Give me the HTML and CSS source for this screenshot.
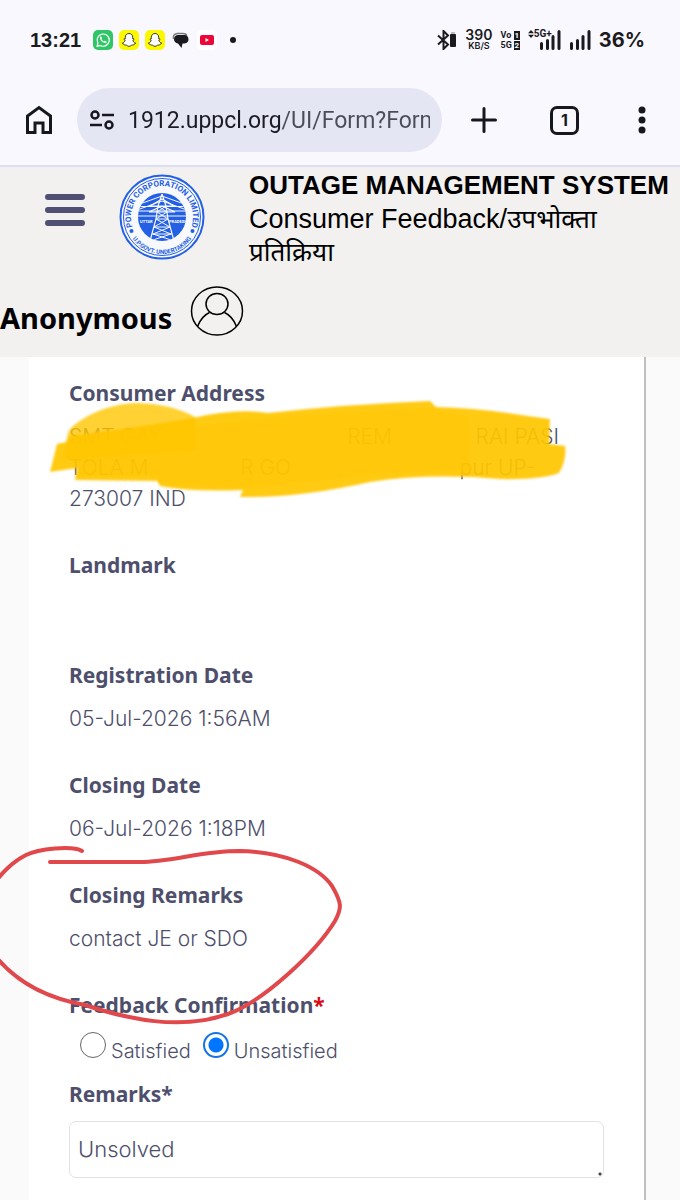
FILE: index.html
```html
<!DOCTYPE html>
<html lang="en">
<head>
    <meta charset="UTF-8">
    <meta name="viewport" content="width=device-width, initial-scale=1.0">
    <title>Outage Management System</title>
    <link rel="stylesheet" href="styles.css">
</head>
<body>
    <div class="status-bar">
        <div class="status-left">
            <span class="clock">13:21</span>
            <svg class="app-icon" viewBox="0 0 20 20">
                <rect width="20" height="20" rx="5" fill="#2fc665"/>
                <path d="M4 16.3l.9-3.2A6.1 6.1 0 1 1 7.2 15.400z" fill="none" stroke="#fff" stroke-width="1.2" stroke-linejoin="round"/>
                <path d="M7.300 6.800c.5-.6 1-.5 1.300.1l.5 1.200c.1.400-.6.800-.5 1.200.5 1 1.200 1.700 2.200 2.100.4.100.8-.9 1.200-.7l1.400.700c.4.200.2.900-.2 1.300-2.200 1.800-7.500-3.300-5.900-5.900z" fill="#fff"/>
            </svg>
            <svg class="app-icon" viewBox="0 0 20 20">
                <rect width="20" height="20" rx="5" fill="#fcf800"/>
                <path id="ghost" d="M10 3.500c2.300 0 3.700 1.700 3.700 3.800v1.500c.5.200 1.200-.3 1.400.2.200.6-1 .8-1.200 1.300-.1.900 1.200 2.300 2.700 2.700.3.800-1.200.9-1.700 1.200-.2.400-.2.800-.5.900-.6.100-1.300-.2-2 .100-.7.400-1.300 1.200-2.400 1.200s-1.700-.8-2.400-1.200c-.7-.3-1.400 0-2-.100-.3-.1-.3-.5-.5-.900-.5-.3-2-.4-1.700-1.200 1.500-.4 2.800-1.800 2.700-2.700-.2-.5-1.400-.7-1.200-1.300.2-.5.900 0 1.400-.200V7.300c0-2.100 1.400-3.800 3.700-3.800z" fill="#fff" stroke="#222" stroke-width=".9"/>
            </svg>
            <svg class="app-icon" viewBox="0 0 20 20">
                <rect width="20" height="20" rx="5" fill="#fcf800"/>
                <use href="#ghost"/>
            </svg>
            <svg class="app-icon" viewBox="0 0 20 20">
                <path d="M2.500 9C2 6 3 3.800 6 3.500h6c2 0 3.500 1 4 2" fill="none" stroke="#777" stroke-width="1.500"/>
                <path d="M7 5h6.500C16 5 17.500 7 17.500 9.300S16 13.500 13.500 13.500H11.500L10.500 18L7 13.500C4.500 13.300 3 11.500 3 9.300S4.500 5 7 5z" fill="#1b1b1f"/>
            </svg>
            <svg class="app-icon" viewBox="0 0 20 20">
                <rect width="20" height="20" rx="5" fill="#fff"/>
                <rect x="3" y="5" width="14" height="10" rx="2" fill="#ed0738"/>
                <path d="M8.500 8v4l3.500-2z" fill="#fff"/>
            </svg>
            <svg class="app-icon" viewBox="0 0 20 20">
                <circle cx="10" cy="10" r="3" fill="#1b1b1f"/>
            </svg>
        </div>
        <div class="status-right">
            <svg width="20" height="20" viewBox="0 0 20 20">
                <path d="M1 5.500l10 9-4.500 4.500V1L11 5.500l-10 9" fill="none" stroke="#1b1b1f" stroke-width="2"/>
                <rect x="13" y="4" width="6" height="13" rx="1" fill="#1b1b1f"/>
                <rect x="14" y="2" width="4" height="2" fill="#bbb"/>
            </svg>
            <span class="net-speed"><b>390</b><small>KB/S</small></span>
            <span class="volte">
                <span>Vo<i>1</i></span>
                <span>5G<i>2</i></span>
            </span>
            <span class="signal">
                <svg width="6" height="8" viewBox="0 0 6 8"><path d="M0 3.200L3 0l3 3.200zM0 4.800L3 8l3-3.200z" fill="#1b1b1f"/></svg>
                <span class="signal-type">5G+</span>
                <svg class="signal-bars" width="22" height="20" viewBox="0 0 22 20"><path d="M2.500 13.500v5M8.500 10.500v8M14 6.500v12M20 1.500v17" stroke="#1b1b1f" stroke-width="3" stroke-linecap="round"/></svg>
            </span>
            <svg width="22" height="20" viewBox="0 0 22 20"><path d="M2.500 13.500v5M8.500 10.500v8M14 6.500v12M20 1.500v17" stroke="#1b1b1f" stroke-width="3" stroke-linecap="round"/></svg>
            <span class="battery">36%</span>
        </div>
    </div>

    <nav class="toolbar">
        <button class="tool-btn" aria-label="Home">
            <svg width="28" height="30" viewBox="0 0 28 30"><path d="M2.500 27.500V11L14 2.500 25.500 11v16.500h-7.500V18h-8v9.500z" fill="none" stroke="#17171f" stroke-width="3"/></svg>
        </button>
        <div class="address">
            <svg width="24" height="20" viewBox="0 0 24 20" fill="none" stroke="#17171f" stroke-width="2.500"><circle cx="5" cy="5" r="3.500"/><path d="M12 5h12M0 15h12"/><circle cx="19" cy="15" r="3.500"/></svg>
            <input class="url" type="text" value="1912.uppcl.org/UI/Form?Form" aria-label="Address">
        </div>
        <button class="tool-btn" aria-label="New tab">
            <svg width="26" height="26" viewBox="0 0 26 26"><path d="M13 1.500v23M1.500 13h23" stroke="#17171f" stroke-width="3" stroke-linecap="round"/></svg>
        </button>
        <button class="tool-btn tabs">1</button>
        <button class="tool-btn" aria-label="Menu">
            <svg width="8" height="28" viewBox="0 0 8 28" fill="#17171f"><circle cx="4" cy="4" r="3.500"/><circle cx="4" cy="14" r="3.500"/><circle cx="4" cy="24" r="3.500"/></svg>
        </button>
    </nav>

    <header class="site-header">
        <div class="brand">
            <button class="hamburger" aria-label="Toggle menu"><span></span><span></span><span></span></button>
            <svg class="logo" viewBox="0 0 86 86">
                <defs>
                    <path id="arcTop" d="M17 60A31 31 0 1 1 69 60"/>
                    <path id="arcBottom" d="M7.500 50A36 36 0 0 0 78.500 50"/>
                    <clipPath id="disc"><circle cx="43" cy="43" r="24"/></clipPath>
                </defs>
                <circle cx="43" cy="43" r="41.500" fill="#f8f9fd" stroke="#2460e4" stroke-width="2"/>
                <circle cx="43" cy="43" r="38.500" fill="none" stroke="#2460e4" stroke-width="1"/>
                <text class="logo-top"><textPath href="#arcTop" startOffset="50%" text-anchor="middle">POWER CORPORATION LIMITED</textPath></text>
                <text class="logo-bottom"><textPath href="#arcBottom" startOffset="50%" text-anchor="middle">U.P.GOVT. UNDERTAKING</textPath></text>
                <circle cx="12.500" cy="57" r="2" fill="#2460e4"/>
                <circle cx="73.500" cy="57" r="2" fill="#2460e4"/>
                <circle cx="43" cy="43" r="24" fill="#2460e4"/>
                <g clip-path="url(#disc)" fill="none" stroke="#f8f9fd">
                    <path d="M43 22L18 31M43 22l25 9M43 27l-25 9M43 27l25 9M18 32.500h50M18 37h50M18 42h50" stroke-width="1"/>
                    <path d="M43 20l-4 12-2 13-6 22M43 20l4 12 2 13 6 22M31 32l12-7 12 7zM30 38l13-6 13 6z" stroke-width="1.200"/>
                    <path d="M39 32l9 6-11 7 14 8-17 7 21 7M47 32l-9 6 11 7-14 8 17 7-21 7M37 45h12M35 53h16M33 60h20" stroke-width="1"/>
                </g>
                <text class="logo-state" x="21" y="49">UTTAR</text>
                <text class="logo-state" x="50" y="49">PRADESH</text>
            </svg>
            <div class="titles">
                <h1>OUTAGE MANAGEMENT SYSTEM</h1>
                <p>Consumer Feedback/<span lang="hi">उपभोक्ता प्रतिक्रिया</span></p>
            </div>
        </div>
        <div class="user">
            <span>Anonymous</span>
            <svg width="54" height="52" viewBox="0 0 54 52" fill="none" stroke="#000" stroke-width="1.500">
                <ellipse cx="27" cy="26" rx="25.500" ry="24"/>
                <ellipse cx="27" cy="19" rx="11" ry="10.500"/>
                <path d="M7.500 41.500C10 35 14 30 19.500 27.500M34.500 27.500C40 30 44 35 46.500 41.500"/>
            </svg>
        </div>
    </header>

    <main class="page">
        <form class="card">
            <div class="field">
                <h2>Consumer Address</h2>
                <p class="hidden-line"><span>SMT GAY</span><span>REM</span><span>RAI PASI</span></p>
                <p class="hidden-line second"><span>TOLA M</span><span>R GO</span><span>pur UP-</span></p>
                <p>273007 IND</p>
            </div>
            <div class="field">
                <h2>Landmark</h2>
                <p></p>
            </div>
            <div class="field">
                <h2>Registration Date</h2>
                <p>05-Jul-2026 1:56AM</p>
            </div>
            <div class="field">
                <h2>Closing Date</h2>
                <p>06-Jul-2026 1:18PM</p>
            </div>
            <div class="field">
                <h2>Closing Remarks</h2>
                <p>contact JE or SDO</p>
            </div>
            <fieldset class="feedback">
                <legend>Feedback Confirmation<span class="required">*</span></legend>
                <div class="choices">
                    <label><input type="radio" name="feedback" value="satisfied"><span>Satisfied</span></label>
                    <label><input type="radio" name="feedback" value="unsatisfied" checked><span>Unsatisfied</span></label>
                </div>
            </fieldset>
            <label class="remarks-label" for="remarks">Remarks*</label>
            <textarea id="remarks" class="remarks" rows="1">Unsolved</textarea>
        </form>

        <!-- marker strokes over the address -->
        <svg class="ink" width="680" height="843" viewBox="0 357 680 843">
            <defs>
                <filter id="soft"><feGaussianBlur stdDeviation="0.8"/></filter>
            </defs>
            <g fill="#ffc605" filter="url(#soft)">
                <path d="M66 445Q67 430 73 426Q100 404 138 403Q172 404 195 417L196 450L66 460z" opacity=".8"/>
                <path d="M57 444L66 442L70 436Q140 427 193 418Q235 408 268 413Q350 404 430 401L436 407Q478 408 528 416L550 419L549 444L565 446Q567 460 559 473Q540 480 500 479Q430 473 370 482Q300 498 240 497L243 490Q190 492 160 486L157 481L75 480L77 468L50 472z" opacity=".93"/>
                <path d="M165 430Q290 413 431 408L470 417V472Q390 471 330 480L245 488L160 484L157 477L78 477L77 450L60 460L66 447z" opacity=".4"/>
            </g>
            <g fill="none" stroke="#e0484c" stroke-width="4" stroke-linecap="round">
                <path d="M82 851C72 845 38 849 26 855Q10 863 -4 881"/>
                <path d="M50 862H140C172 862 200 851 240 851C285 852 319 867 332 886C342 903 342 908 335 921C316 952 264 1001 228 1014C180 1031 127 1019 85 1005C45 998 15 980 -4 957"/>
            </g>
        </svg>
    </main>
</body>
</html>
```
FILE: styles.css
```css
* {
    box-sizing: border-box;
}
body {
    margin: 0;
    min-height: 100vh;
    display: flex;
    flex-direction: column;
    font-family: Inter, "Noto Sans", sans-serif;
    background-color: #fafafa;
    overflow-x: hidden;
}
h1, h2, p {
    margin: 0;
}
button {
    padding: 0;
    border: none;
    background: none;
    color: #17171f;
    cursor: pointer;
}
svg {
    display: block;
    flex: none;
}

/* phone status bar */
.status-bar {
    display: flex;
    justify-content: space-between;
    align-items: center;
    height: 80px;
    padding: 0 35px 0 30px;
    background-color: #f9f8fe;
    color: #1b1b1f;
}
.status-left {
    display: flex;
    align-items: center;
    gap: 6px;
}
.clock {
    margin-right: 6px;
    font: bold 20px "Liberation Sans", sans-serif;
}
.app-icon {
    width: 20px;
    height: 20px;
}
.status-right {
    display: flex;
    align-items: center;
    gap: 8px;
}
.net-speed {
    display: flex;
    flex-direction: column;
    align-items: center;
    line-height: 10px;
}
.net-speed b {
    font-size: 14px;
    line-height: 12px;
    font-weight: 600;
}
.net-speed small {
    font-size: 9px;
    font-weight: 600;
}
.volte {
    display: flex;
    flex-direction: column;
    gap: 1px;
    font: bold 9px/9px Roboto, sans-serif;
}
.volte span {
    display: flex;
    justify-content: space-between;
    gap: 2px;
}
.volte i {
    width: 6px;
    background-color: #1b1b1f;
    color: #fff;
    font-size: 8px;
    font-style: normal;
    text-align: center;
}
.signal {
    position: relative;
    display: flex;
    align-items: flex-start;
    width: 33px;
    height: 20px;
}
.signal-type {
    font: bold 10px/8px Roboto, sans-serif;
}
.signal-bars {
    position: absolute;
    right: 0;
    top: 0;
}
.battery {
    font-size: 20px;
    font-weight: 700;
}

/* browser toolbar */
.toolbar {
    display: flex;
    align-items: center;
    height: 87px;
    padding: 0 34px 5px 25px;
    background-color: #f9f8fe;
    border-bottom: 2px solid #dddff0;
}
.address {
    flex: 1;
    min-width: 0;
    display: flex;
    align-items: center;
    gap: 14px;
    height: 64px;
    margin: 0 29px 0 24px;
    padding: 0 12px 0 13px;
    border-radius: 32px;
    background-color: #e4e6f3;
}
.url {
    flex: 1;
    min-width: 0;
    padding: 0;
    border: none;
    outline: none;
    font: 23px Roboto, sans-serif;
    color: transparent;
    background: linear-gradient(90deg, #1b1b26 152px, #4b4c5b 152px);
    -webkit-background-clip: text;
    background-clip: text;
}
.tabs {
    width: 29px;
    height: 29px;
    margin: 0 59px 0 53px;
    border: 3px solid #17171f;
    border-radius: 7px;
    font: bold 16px Inter, sans-serif;
}

/* site header */
.site-header {
    height: 190px;
    background-color: #f2f1f0;
    color: #000;
}
.brand {
    display: flex;
    align-items: flex-start;
    height: 112px;
    padding-left: 45px;
}
.hamburger {
    display: flex;
    flex-direction: column;
    gap: 7px;
    width: 40px;
    margin-top: 27px;
}
.hamburger span {
    width: 100%;
    height: 6px;
    border-radius: 3px;
    background-color: #4f5074;
}
.logo {
    width: 86px;
    height: 86px;
    margin: 7px 44px 0 34px;
}
.logo text {
    fill: #2460e4;
    font-family: Roboto, sans-serif;
    font-weight: bold;
}
.logo .logo-top {
    font-size: 8px;
}
.logo .logo-bottom {
    font-size: 6px;
}
.logo .logo-state {
    fill: #fff;
    font-size: 4px;
}
.titles {
    flex: 1;
    min-width: 0;
    font-family: "Liberation Sans", "Noto Sans", sans-serif;
}
.titles h1 {
    font-size: 26px;
    line-height: 36px;
    font-weight: 700;
    white-space: nowrap;
}
.titles p {
    padding-right: 60px;
    font-size: 27px;
    line-height: 33px;
}
.titles p span {
    font-size: 26px;
}
.user {
    display: flex;
    align-items: center;
    gap: 18px;
    padding-top: 5px;
    font: bold 29px/40px "Noto Sans", sans-serif;
}
.user span {
    padding-top: 14px;
}

/* complaint details */
.page {
    position: relative;
    flex: 1;
    display: flex;
}
.card {
    flex: 1;
    min-width: 0;
    margin: 0 34px 0 29px;
    padding: 21px 40px 20px;
    border-right: 2px solid #bebebe;
    background-color: #fff;
    color: #4e4f6c;
}
.field {
    margin-bottom: 36px;
}
.field h2, .feedback legend, .remarks-label {
    display: block;
    padding: 0;
    font: bold 21px/30px "Noto Sans", sans-serif;
}
.field p {
    min-height: 31px;
    font-size: 21px;
    line-height: 31px;
    font-weight: 300;
}
.field h2 {
    margin-bottom: 13px;
}
.field .hidden-line {
    display: grid;
    grid-template-columns: 52% 24% 24%;
    white-space: nowrap;
}
.field .hidden-line.second {
    grid-template-columns: 32% 41% 27%;
}
.feedback {
    margin: 0;
    padding: 0;
    border: none;
}
.required {
    color: #dc0a14;
}
.choices {
    display: flex;
    gap: 12px;
    height: 59px;
    padding: 12px 0 0 11px;
}
.choices label {
    display: flex;
    align-items: flex-start;
    gap: 5px;
    font-size: 20px;
    line-height: 26px;
    font-weight: 300;
}
.choices span {
    padding-top: 6px;
}
.choices input {
    appearance: none;
    width: 26px;
    height: 26px;
    margin: 0;
    border: 1px solid #666;
    border-radius: 50%;
    background-color: #fff;
}
.choices input:checked {
    border: 2px solid #1473e6;
    background: radial-gradient(circle, #0075ff 7px, #fff 8px);
}
.remarks {
    display: block;
    width: 100%;
    height: 57px;
    margin-top: 12px;
    padding: 11px 8px;
    border: 1px solid #e2e2e2;
    border-radius: 7px;
    outline: none;
    overflow: hidden;
    font: 300 22px/32px Inter, sans-serif;
    color: #4e4f6c;
}
.remarks::-webkit-resizer {
    background: radial-gradient(circle at 12px 12px, #444 1px, transparent 2px);
}
.ink {
    position: absolute;
    left: 0;
    top: 0;
    pointer-events: none;
}
```
